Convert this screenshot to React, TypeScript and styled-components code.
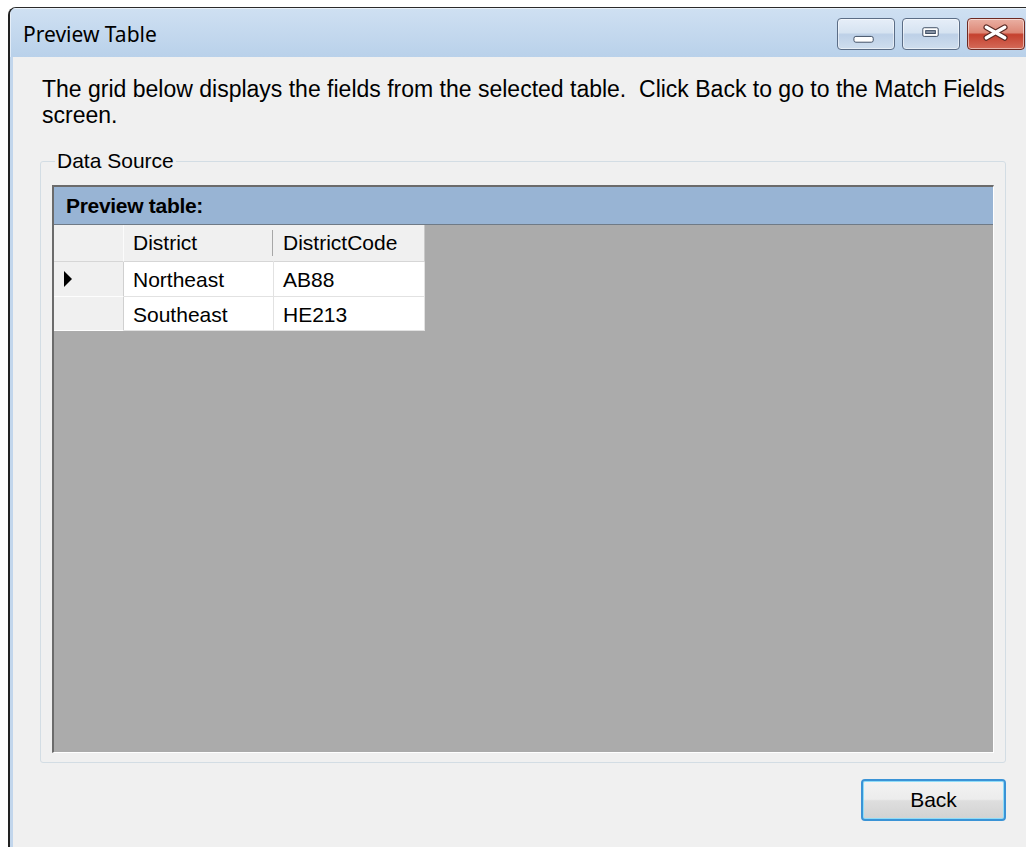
import { Fragment } from "react";
import styled, { createGlobalStyle } from "styled-components";

const GlobalStyle = createGlobalStyle`
  html, body {
    margin: 0;
    height: 100%;
    overflow: hidden;
    background: #ffffff;
  }
  #root {
    height: 100%;
  }
`;

type Row = { district: string; code: string; current?: boolean; height: number };

const intro =
  "The grid below displays the fields from the selected table.  Click Back to go to the Match Fields screen.";

const columns = [
  { key: "district" as const, title: "District", width: 150 },
  { key: "code" as const, title: "DistrictCode", width: 151 },
];

const rows: Row[] = [
  { district: "Northeast", code: "AB88", current: true, height: 35 },
  { district: "Southeast", code: "HE213", height: 34 },
];

const MinGlyph = () => (
  <svg width="58" height="32" viewBox="0 0 58 32">
    <rect x="16.5" y="18.5" width="20" height="6" rx="2" fill="#ffffff" stroke="#3d4c61" />
  </svg>
);

const MaxGlyph = () => (
  <svg width="58" height="32" viewBox="0 0 58 32">
    <rect x="20.5" y="9.5" width="16" height="9" rx="1.5" fill="#ffffff" stroke="#3d4c61" />
    <rect x="23.5" y="12.5" width="10" height="3" fill="#8a95a6" stroke="#3d4c61" />
  </svg>
);

const CloseGlyph = () => (
  <svg width="58" height="32" viewBox="0 0 58 32">
    <path d="M19 9 L38 20 M38 9 L19 20" stroke="#5a2a24" strokeWidth="6" strokeLinecap="round" />
    <path d="M19 9 L38 20 M38 9 L19 20" stroke="#ffffff" strokeWidth="3.6" strokeLinecap="round" />
  </svg>
);

export default function App() {
  return (
    <>
      <GlobalStyle />
      <Page>
        <Window>
          <TitleBar>
            <Title>Preview Table</Title>
            <CaptionButtons>
              <CaptionButton>
                <MinGlyph />
              </CaptionButton>
              <CaptionButton>
                <MaxGlyph />
              </CaptionButton>
              <CaptionButton $close>
                <CloseGlyph />
              </CaptionButton>
            </CaptionButtons>
          </TitleBar>
          <Client>
            <Intro>{intro}</Intro>
            <GroupBox>
              <Legend>Data Source</Legend>
              <DataGrid>
                <GridCaption>Preview table:</GridCaption>
                <GridArea>
                  <Cells
                    style={{
                      gridTemplateColumns: `70px ${columns.map((c) => c.width + "px").join(" ")}`,
                      gridTemplateRows: `37px ${rows.map((r) => r.height + "px").join(" ")}`,
                    }}
                  >
                    <CornerCell />
                    {columns.map((c, i) => (
                      <HeaderCell key={c.key} $divider={i < columns.length - 1}>
                        {c.title}
                      </HeaderCell>
                    ))}
                    {rows.map((r) => (
                      <Fragment key={r.code}>
                        <RowHeader>
                          {r.current && (
                            <svg width="9" height="16" viewBox="0 0 9 16">
                              <polygon points="0,0 8,8 0,16" fill="#000" />
                            </svg>
                          )}
                        </RowHeader>
                        {columns.map((c) => (
                          <Cell key={c.key}>{r[c.key]}</Cell>
                        ))}
                      </Fragment>
                    ))}
                  </Cells>
                </GridArea>
              </DataGrid>
            </GroupBox>
            <ButtonRow>
              <PushButton>Back</PushButton>
            </ButtonRow>
          </Client>
        </Window>
      </Page>
    </>
  );
}

const Page = styled.div`
  height: 100%;
  box-sizing: border-box;
  padding: 7px 0 0 8px;
  display: flex;
  font-family: "Liberation Sans", Arial, sans-serif;
  font-size: 21px;
  color: #000;
`;

const Window = styled.div`
  flex: 1;
  display: flex;
  flex-direction: column;
  border-top: 1px solid #2b2b2b;
  border-left: 2px solid #222222;
  border-top-left-radius: 8px;
  background: #c2d6ec;
  overflow: hidden;
`;

const TitleBar = styled.div`
  height: 49px;
  flex: none;
  display: flex;
  align-items: flex-start;
  justify-content: space-between;
  padding-left: 13px;
  background: linear-gradient(#cfe0f2, #b9d1ea);
  box-shadow: inset 1px 1px 0 rgba(255, 255, 255, 0.55);
`;

const Title = styled.div`
  margin-top: 12px;
  font-family: "Noto Sans", "Open Sans", sans-serif;
  font-size: 21px;
  line-height: 28px;
  color: #000;
`;

const CaptionButtons = styled.div`
  display: flex;
  gap: 7px;
  margin-top: 10px;
  margin-right: 1px;
`;

const CaptionButton = styled.div<{ $close?: boolean }>`
  width: 58px;
  height: 32px;
  box-sizing: border-box;
  border: 1px solid ${(p) => (p.$close ? "#6e2a22" : "#5b6d86")};
  border-radius: 4px;
  display: flex;
  align-items: center;
  justify-content: center;
  background: ${(p) =>
    p.$close
      ? "linear-gradient(#eab0a3 0%, #dd8877 45%, #c5412f 52%, #d46a58 100%)"
      : "linear-gradient(#e6eef8 0%, #d6e3f1 45%, #bdd0e7 52%, #cfdeee 100%)"};
  box-shadow: inset 0 0 0 1px rgba(255, 255, 255, 0.5);

  svg {
    display: block;
  }
`;

const Client = styled.div`
  flex: 1;
  margin-left: 3px;
  background: #f0f0f0;
  display: flex;
  flex-direction: column;
  padding-top: 19px;
`;

const Intro = styled.p`
  margin: 0;
  padding: 0 14px 0 29px;
  font-size: 23px;
  line-height: 26px;
  white-space: pre-wrap;
`;

const GroupBox = styled.fieldset`
  flex: 1;
  display: flex;
  flex-direction: column;
  min-width: 0;
  margin: 21px 20px 0 27px;
  padding: 12px 11px 9px 11px;
  border: 1px solid #d3dde4;
  border-radius: 3px;
`;

const Legend = styled.legend`
  margin-left: 3px;
  padding: 0 2px;
  line-height: 24px;
`;

const DataGrid = styled.div`
  flex: 1;
  display: flex;
  flex-direction: column;
  border-top: 2px solid #6b6b6b;
  border-left: 2px solid #6b6b6b;
  border-right: 1px solid #ffffff;
  border-bottom: 1px solid #ffffff;
`;

const GridCaption = styled.div`
  height: 37px;
  border-bottom: 1px solid #6f7a86;
  background: #98b4d4;
  padding-left: 12px;
  display: flex;
  align-items: center;
  font-weight: bold;
  letter-spacing: -0.3px;
`;

const GridArea = styled.div`
  flex: 1;
  background: #ababab;
`;

const Cells = styled.div`
  display: grid;
  justify-content: start;
`;

const CornerCell = styled.div`
  background: #f0f0f0;
  border-right: 1px solid #fbfbfb;
  border-bottom: 1px solid #d6d6d6;
`;

const HeaderCell = styled.div<{ $divider?: boolean }>`
  background-color: #f0f0f0;
  background-image: ${(p) => (p.$divider ? "linear-gradient(#a7a7a7, #a7a7a7)" : "none")};
  background-size: 1px 26px;
  background-position: right center;
  background-repeat: no-repeat;
  border-bottom: 1px solid #d6d6d6;
  border-right: 1px solid ${(p) => (p.$divider ? "#f0f0f0" : "#c8c8c8")};
  padding-left: 9px;
  display: flex;
  align-items: center;
`;

const RowHeader = styled.div`
  background: #f0f0f0;
  border-bottom: 1px solid #fdfdfd;
  border-right: 1px solid #d0d0d0;
  display: flex;
  align-items: center;
  padding-left: 10px;
`;

const Cell = styled.div`
  background: #ffffff;
  border-right: 1px solid #e2e2e2;
  border-bottom: 1px solid #e2e2e2;
  padding: 2px 0 0 9px;
  display: flex;
  align-items: center;
`;

const ButtonRow = styled.div`
  display: flex;
  justify-content: flex-end;
  padding: 16px 20px 26px 0;
`;

const PushButton = styled.button`
  width: 145px;
  height: 42px;
  font-family: "Liberation Sans", Arial, sans-serif;
  font-size: 21px;
  color: #000;
  border: 2px solid #3a93d6;
  border-radius: 4px;
  background: linear-gradient(#f3f3f3 0%, #ececec 48%, #dedede 52%, #d2d2d2 100%);
  box-shadow: inset 0 0 0 1px #8fdcf8;
  padding: 0;
`;
